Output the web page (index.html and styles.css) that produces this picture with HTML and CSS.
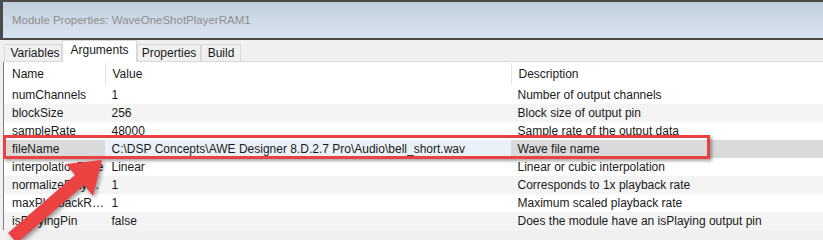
FILE: index.html
```html
<!DOCTYPE html>
<html lang="en">
<head>
  <meta charset="UTF-8">
  <title>Module Properties</title>
  <link rel="stylesheet" href="styles.css">
</head>
<body>
  <div class="window">
    <div class="titlebar">Module Properties: WaveOneShotPlayerRAM1</div>

    <div class="tabs">
      <div class="tab tab-variables">Variables</div>
      <div class="tab tab-arguments active">Arguments</div>
      <div class="tab tab-properties">Properties</div>
      <div class="tab tab-build">Build</div>
    </div>

    <table class="grid">
      <colgroup>
        <col class="col-name">
        <col class="col-value">
        <col class="col-desc">
      </colgroup>
      <thead>
        <tr>
          <th><span class="sep">Name</span></th>
          <th><span class="sep">Value</span></th>
          <th><span class="sep">Description</span></th>
        </tr>
      </thead>
      <tbody>
        <tr>
          <td>numChannels</td>
          <td>1</td>
          <td>Number of output channels</td>
        </tr>
        <tr>
          <td>blockSize</td>
          <td>256</td>
          <td>Block size of output pin</td>
        </tr>
        <tr>
          <td>sampleRate</td>
          <td>48000</td>
          <td>Sample rate of the output data</td>
        </tr>
        <tr class="selected">
          <td>fileName</td>
          <td>C:\DSP Concepts\AWE Designer 8.D.2.7 Pro\Audio\bell_short.wav</td>
          <td>Wave file name</td>
        </tr>
        <tr>
          <td>interpolationType</td>
          <td>Linear</td>
          <td>Linear or cubic interpolation</td>
        </tr>
        <tr>
          <td>normalizePlaybackRate</td>
          <td>1</td>
          <td>Corresponds to 1x playback rate</td>
        </tr>
        <tr>
          <td>maxPlaybackRate</td>
          <td>1</td>
          <td>Maximum scaled playback rate</td>
        </tr>
        <tr>
          <td>isPlayingPin</td>
          <td>false</td>
          <td>Does the module have an isPlaying output pin</td>
        </tr>
      </tbody>
    </table>
  </div>

  <!-- annotation drawn over the screenshot -->
  <div class="highlight"></div>
  <svg class="arrow" width="823" height="240" viewBox="0 0 823 240">
    <polygon points="102,160 93,196 84,185 17,243 8,233 75,175 66,164"></polygon>
  </svg>
</body>
</html>
```

FILE: styles.css
```css
body {
  margin: 0;
  background-color: #f0f0f0;
  font-family: "Liberation Sans", Arial, sans-serif;
  font-size: 12px;
  color: #1a1a1a;
  overflow: hidden;
}

.window {
  width: 823px;
  height: 240px;
}

.titlebar {
  height: 36px;
  line-height: 36px;
  padding-left: 9px;
  border-top: 2px solid #4a4a4a;
  border-bottom: 2px solid #4a4a4a;
  border-left: 3px solid #4a4a4a;
  background: linear-gradient(#bfcddb, #d0dcea 60%, #d7e3f0);
  color: #8e8e8e;
  font-size: 11.5px;
}

.tabs {
  display: flex;
  align-items: flex-end;
  height: 21px;
  padding-left: 4px;
}

.tab {
  height: 17px;
  line-height: 17px;
  box-sizing: border-box;
  border: 1px solid #d9d9d9;
  border-bottom: none;
  background-color: #f0f0f0;
  text-align: center;
}

.tab-variables {
  width: 58px;
  padding-left: 4px;
}

.tab-arguments {
  width: 75px;
}

.tab-properties {
  width: 64px;
}

.tab-build {
  width: 40px;
}

.tab.active {
  height: 22px;
  line-height: 19px;
  background-color: #fff;
  margin-bottom: -1px;
  position: relative;
}

.grid {
  width: 820px;
  margin-left: 3px;
  border-collapse: collapse;
  table-layout: fixed;
  background-color: #fff;
  border-left: 1px solid #7f7f7f;
  border-top: 1px solid #d9d9d9;
}

.col-name {
  width: 101px;
}

.col-value {
  width: 406px;
}

th {
  height: 24px;
  padding: 0;
  font-weight: normal;
  text-align: left;
}

th .sep {
  display: block;
  height: 22px;
  line-height: 22px;
  padding-left: 8px;
}

th + th .sep {
  padding-left: 7px;
  border-left: 1px solid #e3e3e3;
}

td {
  height: 18px;
  padding: 0 0 0 7px;
  white-space: nowrap;
  overflow: hidden;
  text-overflow: ellipsis;
}

td:first-child {
  padding-left: 8px;
}

tbody tr:nth-child(even) {
  background-color: #f4f4f4;
}

tr.selected td {
  background-color: #dadada;
}

tr.selected td:nth-child(2) {
  background-color: #eaf1f8;
}

.highlight {
  position: absolute;
  left: 3px;
  top: 135px;
  width: 707px;
  height: 24px;
  box-sizing: border-box;
  border: 3px solid #ea4242;
  box-shadow: 2px 2px 3px rgba(0, 0, 0, 0.35);
}

.arrow {
  position: absolute;
  left: 0;
  top: 0;
  filter: drop-shadow(2px 2px 2px rgba(0, 0, 0, 0.4));
}

.arrow polygon {
  fill: #ec4242;
}
```
